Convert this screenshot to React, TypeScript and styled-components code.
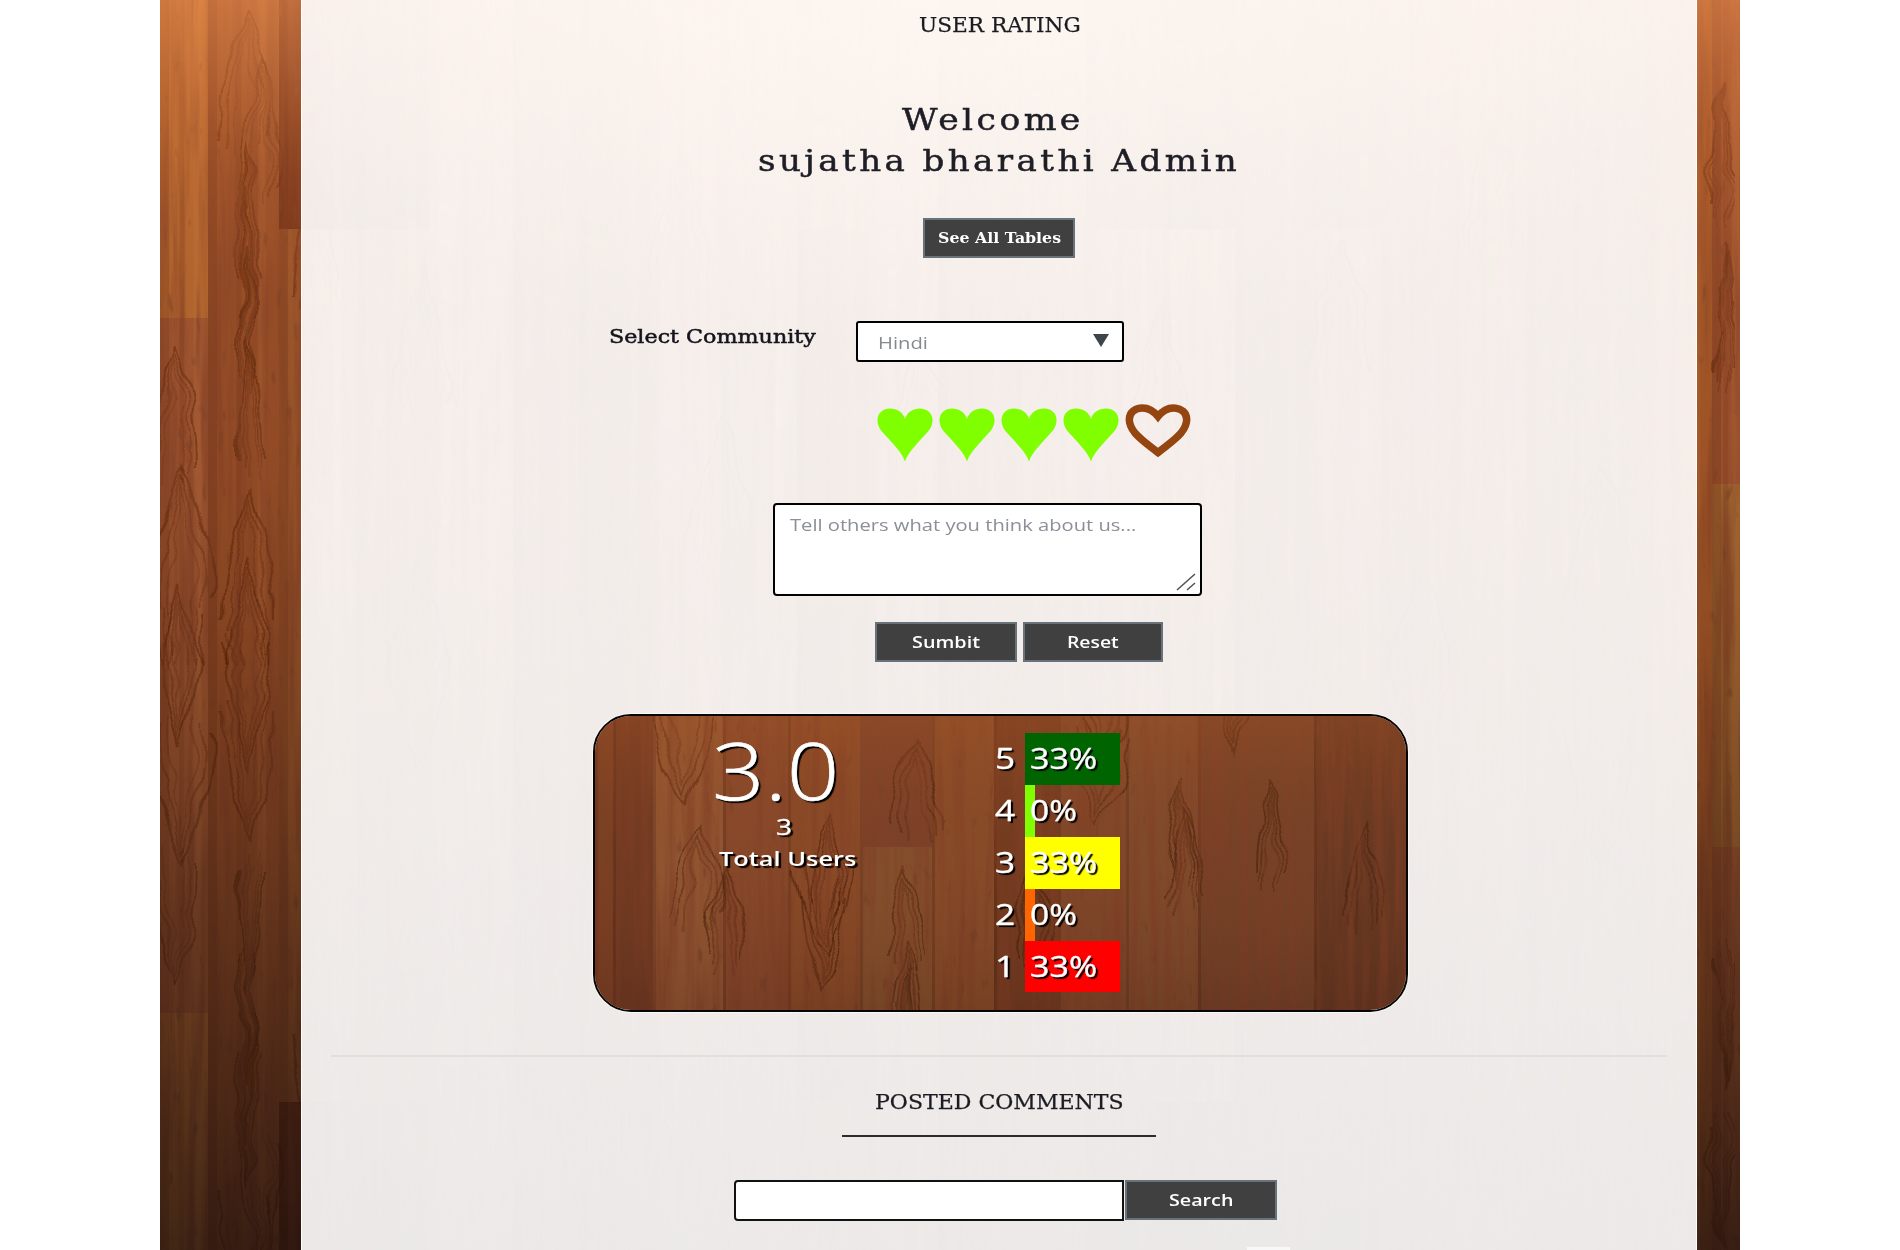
import React, { useLayoutEffect, useRef, useState } from "react";
import styled, { createGlobalStyle } from "styled-components";

const slab = `"DejaVu Serif", "Liberation Serif", serif`;
const sans = `"Open Sans", "Noto Sans", sans-serif`;

const GlobalStyle = createGlobalStyle`
  * { box-sizing: border-box; }
  body { margin: 0; background: #fff; }
`;

const Page = styled.div`
  display: flex;
  width: 1900px;
  height: 1250px;
  padding-left: 160px;
  background: #fff;
  overflow: hidden;
`;

const Desk = styled.div`
  position: relative;
  width: 1580px;
  height: 1250px;
  padding-left: 141px;
  overflow: hidden;
  background: #7c4020;
`;

const Backdrop = styled.svg`
  position: absolute;
  inset: 0;
  width: 100%;
  height: 100%;
`;

const Panel = styled.main`
  position: relative;
  display: flex;
  flex-direction: column;
  width: 1396px;
  height: 1250px;
  padding-top: 10px;
  background: rgba(255, 255, 255, 0.905);
  border-left: 1px solid #fff;
  border-right: 1px solid #fff;
`;

const FitBox = styled.span<{ $w: number }>`
  display: block;
  width: ${(p) => p.$w}px;
  text-align: left;
  white-space: nowrap;
`;

const FitText = styled.span`
  display: inline-block;
  vertical-align: top;
  transform-origin: 0 0;
`;

function Fit({ w, children }: { w: number; children: React.ReactNode }) {
  const ref = useRef<HTMLSpanElement>(null);
  const [scale, setScale] = useState(1);
  useLayoutEffect(() => {
    if (ref.current) setScale(w / ref.current.offsetWidth);
  }, [w]);
  return (
    <FitBox $w={w}>
      <FitText ref={ref} style={{ transform: `scaleX(${scale})` }}>
        {children}
      </FitText>
    </FitBox>
  );
}

const SectionTitle = styled.h2<{ $left: number; $top?: number }>`
  margin: ${(p) => p.$top ?? 0}px 0 0 ${(p) => p.$left}px;
  font: 400 20px/30px ${slab};
  color: #1b1b22;
  -webkit-text-stroke: 0.25px #1b1b22;
`;

const Greeting = styled.h1`
  display: flex;
  flex-direction: column;
  margin: 59px 0 0;
  font: 400 30px/41px ${slab};
  letter-spacing: 3px;
  color: #1e1e26;
  -webkit-text-stroke: 0.5px #1e1e26;
`;

const GreetingLine = styled.span<{ $left: number }>`
  margin-left: ${(p) => p.$left}px;
`;

const Button = styled.button<{ $w: number; $font?: string; $h?: number }>`
  display: flex;
  align-items: center;
  justify-content: center;
  width: ${(p) => p.$w}px;
  height: ${(p) => p.$h ?? 40}px;
  padding: 0;
  border: 2px solid #68727b;
  background: #404040;
  color: #fff;
  font: ${(p) => p.$font ?? `600 16px/24px ${sans}`};
`;

const TablesRow = styled.div`
  display: flex;
  margin: 37px 0 0 621px;
`;

const CommunityRow = styled.div`
  display: flex;
  align-items: flex-start;
  gap: 40px;
  height: 41px;
  margin: 63px 0 0 307px;
`;

const Label = styled.label`
  font: 400 19px/30px ${slab};
  color: #14141c;
  -webkit-text-stroke: 0.5px #14141c;
`;

const SelectBox = styled.div`
  display: flex;
  align-items: center;
  justify-content: space-between;
  width: 268px;
  height: 41px;
  padding: 2px 13px 0 20px;
  border: 2px solid #000;
  border-radius: 3px;
  background: #fff;
  color: #868a90;
  font: 400 17px/24px ${sans};
`;

const Caret = styled.i`
  width: 0;
  height: 0;
  margin-top: -5px;
  border: 8px solid transparent;
  border-top: 13px solid #3d454c;
  border-bottom: 0;
`;

const Hearts = styled.div`
  display: flex;
  gap: 6px;
  height: 58px;
  margin: 42px 0 0 575px;
`;

const FullHeart = styled.svg`
  width: 56px;
  height: 54px;
  margin-top: 4px;
`;

const OpenHeart = styled.svg`
  width: 66px;
  height: 54px;
`;

const CommentBox = styled.div`
  display: flex;
  justify-content: space-between;
  width: 429px;
  height: 93px;
  margin: 41px 0 0 471px;
  padding: 8px 4px 3px 15px;
  border: 2px solid #000;
  border-radius: 4px;
  background: #fff;
  color: #8b8f96;
  font: 400 17px/24px ${sans};
`;

const Grip = styled.svg`
  align-self: flex-end;
  flex: none;
  width: 20px;
  height: 18px;
`;

const Actions = styled.div`
  display: flex;
  gap: 6px;
  margin: 26px 0 0 573px;
`;

const Summary = styled.section`
  position: relative;
  display: flex;
  width: 815px;
  height: 298px;
  margin: 52px 0 0 291px;
  border: 2px solid #080605;
  border-radius: 38px;
  overflow: hidden;
  box-shadow: 0 0 1px 1px rgba(255, 255, 255, 0.7);
  color: #fff;
  text-shadow: 2px 2px 1px #000;
`;

const Score = styled.div`
  position: relative;
  display: flex;
  flex-direction: column;
  width: 431px;
`;

const Average = styled.div`
  margin: 11px 0 0 117px;
  font: 300 80px/84px ${sans};
  -webkit-text-stroke: 0.6px #fff;
`;

const Count = styled.div`
  margin: 0 0 0 181px;
  font: 400 21px/32px ${sans};
  -webkit-text-stroke: 0.3px #fff;
`;

const CountLabel = styled.div`
  margin: 0 0 0 124px;
  font: 600 20px/32px ${sans};
`;

const Chart = styled.div`
  position: relative;
  display: flex;
  flex-direction: column;
  margin: 17px 0 0 -31px;
`;

const ChartRow = styled.div`
  display: flex;
  height: 51.9px;
  font: 400 30px/50px ${sans};
  -webkit-text-stroke: 0.4px #fff;
`;

const Stars = styled.span`
  width: 30px;
`;

const Bar = styled.div<{ $color: string }>`
  height: 51.9px;
  padding-left: 5px;
  background: ${(p) => p.$color};
`;

const Divider = styled.hr`
  width: 1336px;
  height: 2px;
  margin: 43px 0 0 29px;
  border: 0;
  background: #dfe0de;
`;

const Underline = styled.div`
  width: 314px;
  height: 2px;
  margin: 18px 0 0 540px;
  background: #2c2c2e;
`;

const SearchRow = styled.form`
  display: flex;
  gap: 1px;
  height: 41px;
  margin: 43px 0 0 432px;
`;

const SearchInput = styled.input`
  width: 390px;
  height: 41px;
  padding: 0 10px;
  border: 2px solid #111;
  border-radius: 4px 0 0 4px;
  background: #fff;
  outline: 0;
  font: 400 17px ${sans};
`;

const NextRow = styled.div`
  width: 43px;
  height: 3px;
  margin: 26px 0 0 945px;
  background: #f8f8f8;
`;

type Plank = { x: number; w: number; cut: number; a: string; b: string };

const planks: Plank[] = [
  { x: 0, w: 48, cut: 318, a: "#b0652f", b: "#9c5430" },
  { x: 48, w: 71, cut: 0, a: "#914a26", b: "#934c27" },
  { x: 119, w: 78, cut: 229, a: "#6f3018", b: "#99542a" },
  { x: 197, w: 72, cut: 229, a: "#71391b", b: "#8d4b24" },
  { x: 269, w: 84, cut: 0, a: "#a25e35", b: "#a05a3a" },
  { x: 353, w: 66, cut: 0, a: "#914b28", b: "#874426" },
  { x: 419, w: 72, cut: 0, a: "#7d4122", b: "#854624" },
  { x: 491, w: 70, cut: 0, a: "#a56136", b: "#a3583c" },
  { x: 561, w: 76, cut: 0, a: "#87441f", b: "#995a3a" },
  { x: 637, w: 71, cut: 230, a: "#99542c", b: "#85401f" },
  { x: 708, w: 70, cut: 0, a: "#a6603a", b: "#a05a3c" },
  { x: 778, w: 76, cut: 0, a: "#94502e", b: "#8c4929" },
  { x: 854, w: 72, cut: 60, a: "#a25d34", b: "#985430" },
  { x: 926, w: 76, cut: 229, a: "#793c22", b: "#a3583c" },
  { x: 1002, w: 73, cut: 229, a: "#6e3a20", b: "#a35c34" },
  { x: 1075, w: 74, cut: 229, a: "#7e4325", b: "#864828" },
  { x: 1149, w: 72, cut: 229, a: "#7d4224", b: "#97502f" },
  { x: 1221, w: 70, cut: 0, a: "#8e4c29", b: "#8e4a2c" },
  { x: 1291, w: 76, cut: 0, a: "#9c5831", b: "#96522d" },
  { x: 1367, w: 118, cut: 0, a: "#85482a", b: "#8d4f2e" },
  { x: 1485, w: 67, cut: 0, a: "#aa5f2c", b: "#a05527" },
  { x: 1552, w: 28, cut: 484, a: "#9b512e", b: "#a06330" },
];

/* Pointed cathedral grain, repeated down the planks that carry it. */
const cathedrals = [
  [84, 10, 26], [100, 58, 20], [88, 146, 12], [88, 188, 8], [88, 250, 10], [92, 330, 13],
  [88, 490, 26], [88, 560, 20], [22, 470, 30], [20, 585, 22], [14, 340, 22],
  [156, 170, 24], [262, 270, 26], [258, 560, 30], [430, 90, 28], [520, 150, 26],
  [560, 420, 34], [760, 330, 30], [905, 60, 34], [1000, 300, 28], [1180, 240, 30],
  [1260, 560, 30], [1330, 120, 26], [1440, 470, 32], [1562, 80, 12], [1566, 240, 9],
];

function WoodHalf() {
  return (
    <g>
      {planks.map((p) => (
        <g key={p.x}>
          <rect x={p.x} y={0} width={p.w + 1} height={666} fill={p.b} />
          {p.cut > 0 && <rect x={p.x} y={0} width={p.w + 1} height={p.cut} fill={p.a} />}
          <rect x={p.x} y={0} width={9} height={666} fill="#3c1408" opacity={0.16} />
          <rect x={p.x + p.w * 0.4} y={0} width={5} height={666} fill="#4c1b0c" opacity={0.12} />
          <rect x={p.x + p.w * 0.7} y={0} width={8} height={666} fill="#e09150" opacity={0.12} />
        </g>
      ))}
      <g fill="none" stroke="#4b1d0b" filter="url(#wobble)">
        {cathedrals.map(([x, y, r]) =>
          [0, 1, 2].map((k) => {
            const a = r * (1 - k * 0.28);
            const t = y + k * 9;
            return (
              <path
                key={`${x}-${y}-${k}`}
                strokeWidth={k === 0 ? 2.2 : 1.6}
                opacity={0.42 - k * 0.1}
                d={`M${x - a} ${t + 130} C${x - a} ${t + 70} ${x - a * 0.35} ${t + 40} ${x} ${t} C${x + a * 0.4} ${t + 30} ${x + a} ${t + 60} ${x + a} ${t + 130}`}
              />
            );
          })
        )}
      </g>
    </g>
  );
}

function Wood() {
  return (
    <Backdrop viewBox="0 0 1580 1250" preserveAspectRatio="none" aria-hidden="true">
      <defs>
        <filter id="wobble" x="0" y="0" width="100%" height="100%">
          <feTurbulence type="fractalNoise" baseFrequency="0.025 0.022" numOctaves="2" seed="4" />
          <feDisplacementMap in="SourceGraphic" scale="22" xChannelSelector="R" yChannelSelector="G" />
          <feGaussianBlur stdDeviation="0.6" />
        </filter>
        <filter id="grain" x="0" y="0" width="100%" height="100%">
          <feTurbulence type="fractalNoise" baseFrequency="0.11 0.006" numOctaves="3" seed="9" />
          <feColorMatrix values="0 0 0 0 0.22  0 0 0 0 0.05  0 0 0 0 0.02  3.2 0 0 0 -1.3" />
        </filter>
        <filter id="flecks" x="0" y="0" width="100%" height="100%">
          <feTurbulence type="fractalNoise" baseFrequency="0.12 0.035" numOctaves="2" seed="21" />
          <feColorMatrix values="0 0 0 0 0.18  0 0 0 0 0.05  0 0 0 0 0.02  0 8 0 0 -5.5" />
        </filter>
        <linearGradient id="shade" x1="0" y1="0" x2="0" y2="1">
          <stop offset="0" stopColor="#ff9a55" stopOpacity="0.5" />
          <stop offset="0.14" stopColor="#e07a3a" stopOpacity="0.2" />
          <stop offset="0.3" stopColor="#a05020" stopOpacity="0.06" />
          <stop offset="0.5" stopColor="#3a1c0a" stopOpacity="0.16" />
          <stop offset="0.72" stopColor="#24140c" stopOpacity="0.42" />
          <stop offset="1" stopColor="#150d0b" stopOpacity="0.72" />
        </linearGradient>
        <radialGradient id="glow" cx="0.5" cy="0" r="0.5">
          <stop offset="0" stopColor="#ffc890" stopOpacity="0.55" />
          <stop offset="1" stopColor="#ffb070" stopOpacity="0" />
        </radialGradient>
      </defs>
      <WoodHalf />
      <g transform="translate(0 1331) scale(1 -1)">
        <WoodHalf />
      </g>
      <rect width="1580" height="1250" filter="url(#grain)" opacity="0.55" />
      <rect width="1580" height="1250" filter="url(#flecks)" opacity="0.5" />
      <rect width="1580" height="1250" fill="url(#shade)" />
      <rect width="1580" height="700" fill="url(#glow)" />
    </Backdrop>
  );
}

const cardPlanks = [
  [0, 18, "#7a4024"], [18, 40, "#713a22"], [58, 70, "#925632"], [128, 65, "#88492b"],
  [193, 72, "#8a4b28"], [265, 72, "#85502d"], [337, 62, "#884c29"], [399, 64, "#733b20"],
  [463, 68, "#81482a"], [531, 72, "#804b2c"], [603, 116, "#754228"], [719, 96, "#663822"],
] as const;

const cardRings = [
  [88, 88, 30, 0], [104, 108, 26, 1], [130, 150, 18, 1], [232, 98, 18, 1], [230, 240, 30, 0],
  [228, 272, 24, 0], [312, 225, 15, 1], [312, 250, 9, 1], [312, 150, 20, 1],
  [320, 20, 24, 1], [510, 60, 24, 0], [502, 110, 30, 0], [586, 60, 14, 1], [590, 90, 18, 1],
  [640, 40, 18, 0], [676, 66, 14, 1], [770, 110, 20, 1], [440, 150, 18, 1],
] as const;

function CardWood() {
  return (
    <Backdrop viewBox="0 0 811 294" preserveAspectRatio="none" aria-hidden="true">
      <defs>
        <linearGradient id="cardShade" x1="0" y1="0" x2="0" y2="1">
          <stop offset="0" stopColor="#b05a26" stopOpacity="0.32" />
          <stop offset="0.5" stopColor="#7a4020" stopOpacity="0.06" />
          <stop offset="1" stopColor="#28100a" stopOpacity="0.18" />
        </linearGradient>
      </defs>
      {cardPlanks.map(([x, w, c]) => (
        <g key={x}>
          <rect x={x} width={w + 1} height="294" fill={c} />
          <rect x={x} width="3" height="294" fill="#2c0f07" opacity="0.2" />
        </g>
      ))}
      <rect x="265" width="72" height="131" fill="#7a422a" />
      <g fill="none" stroke="#3b180b" filter="url(#wobble)">
        {cardRings.map(([x, y, r, up], i) =>
          [0, 1, 2].map((k) => {
            const a = r * (1 - k * 0.28);
            const s = up ? 1 : -1;
            const t = y + s * k * 9;
            return (
              <path
                key={`${i}-${k}`}
                strokeWidth={1.8}
                opacity={0.5 - k * 0.12}
                d={`M${x - a} ${t + s * 90} C${x - a} ${t + s * 45} ${x - a * 0.4} ${t + s * 25} ${x} ${t} C${x + a * 0.4} ${t + s * 25} ${x + a} ${t + s * 45} ${x + a} ${t + s * 90}`}
              />
            );
          })
        )}
      </g>
      <rect width="811" height="294" filter="url(#grain)" opacity="0.6" />
      <rect width="811" height="294" filter="url(#flecks)" opacity="0.6" />
      <rect width="811" height="294" fill="url(#cardShade)" />
    </Backdrop>
  );
}

const ratings = [
  { stars: 5, percent: 33, color: "#006400", width: 67 },
  { stars: 4, percent: 0, color: "#7fff00", width: 47 },
  { stars: 3, percent: 33, color: "#ffff00", width: 67 },
  { stars: 2, percent: 0, color: "#ff6600", width: 47 },
  { stars: 1, percent: 33, color: "#ff0000", width: 67 },
];

export default function App() {
  return (
    <Page>
      <GlobalStyle />
      <Desk>
        <Wood />
        <Panel>
          <SectionTitle $left={617}>
            <Fit w={162}>USER RATING</Fit>
          </SectionTitle>
          <Greeting>
            <GreetingLine $left={600}>
              <Fit w={182}>Welcome</Fit>
            </GreetingLine>
            <GreetingLine $left={456}>
              <Fit w={482}>sujatha bharathi Admin</Fit>
            </GreetingLine>
          </Greeting>
          <TablesRow>
            <Button $w={152} $font={`700 15px/24px ${slab}`}>
              <Fit w={123}>See All Tables</Fit>
            </Button>
          </TablesRow>
          <CommunityRow>
            <Label>
              <Fit w={207}>Select Community</Fit>
            </Label>
            <SelectBox>
              <Fit w={50}>Hindi</Fit>
              <Caret />
            </SelectBox>
          </CommunityRow>
          <Hearts>
            {[1, 2, 3, 4].map((n) => (
              <FullHeart key={n} viewBox="0 0 56 54">
                <path
                  fill="#80ff00"
                  d="M28 53.500 C25 45 18 38 9 28 C3 22 0.500 18 0.500 12 C0.500 5 6 0.500 13 0.500 C20 0.500 26 4 28 11 C30 4 36 0.500 43 0.500 C50 0.500 55.500 5 55.500 12 C55.500 18 53 22 47 28 C38 38 31 45 28 53.500 Z"
                />
              </FullHeart>
            ))}
            <OpenHeart viewBox="0 0 66 54">
              <path
                fill="none"
                stroke="#954510"
                strokeWidth="7.500"
                d="M33 48.500 C25 42 17 37 10 29 C6 24 4.300 20 4.300 15.500 C4.300 8.500 10 4 17.500 4 C25 4 29 7.500 33 12.500 C37 7.500 41 4 48.500 4 C56 4 61.700 8.500 61.700 15.500 C61.700 20 60 24 56 29 C49 37 41 42 33 48.500 Z"
              />
            </OpenHeart>
          </Hearts>
          <CommentBox>
            <Fit w={346}>Tell others what you think about us...</Fit>
            <Grip viewBox="0 0 20 18">
              <path d="M1 17 L19 1 M11 17 L19 10" stroke="#555" strokeWidth="1.600" fill="none" />
            </Grip>
          </CommentBox>
          <Actions>
            <Button $w={142}>
              <Fit w={68}>Sumbit</Fit>
            </Button>
            <Button $w={140}>
              <Fit w={52}>Reset</Fit>
            </Button>
          </Actions>
          <Summary>
            <CardWood />
            <Score>
              <Average>
                <Fit w={127}>3.0</Fit>
              </Average>
              <Count>
                <Fit w={16}>3</Fit>
              </Count>
              <CountLabel>
                <Fit w={137}>Total Users</Fit>
              </CountLabel>
            </Score>
            <Chart>
              {ratings.map((r) => (
                <ChartRow key={r.stars}>
                  <Stars>
                    <Fit w={20}>{r.stars}</Fit>
                  </Stars>
                  <Bar $color={r.color} style={{ width: Math.max(10, r.percent * 2.89) }}>
                    <Fit w={r.width}>{r.percent}%</Fit>
                  </Bar>
                </ChartRow>
              ))}
            </Chart>
          </Summary>
          <Divider />
          <SectionTitle $left={573} $top={30}>
            <Fit w={249}>POSTED COMMENTS</Fit>
          </SectionTitle>
          <Underline />
          <SearchRow>
            <SearchInput aria-label="Search" />
            <Button $w={152} $h={40}>
              <Fit w={64}>Search</Fit>
            </Button>
          </SearchRow>
          <NextRow />
        </Panel>
      </Desk>
    </Page>
  );
}
